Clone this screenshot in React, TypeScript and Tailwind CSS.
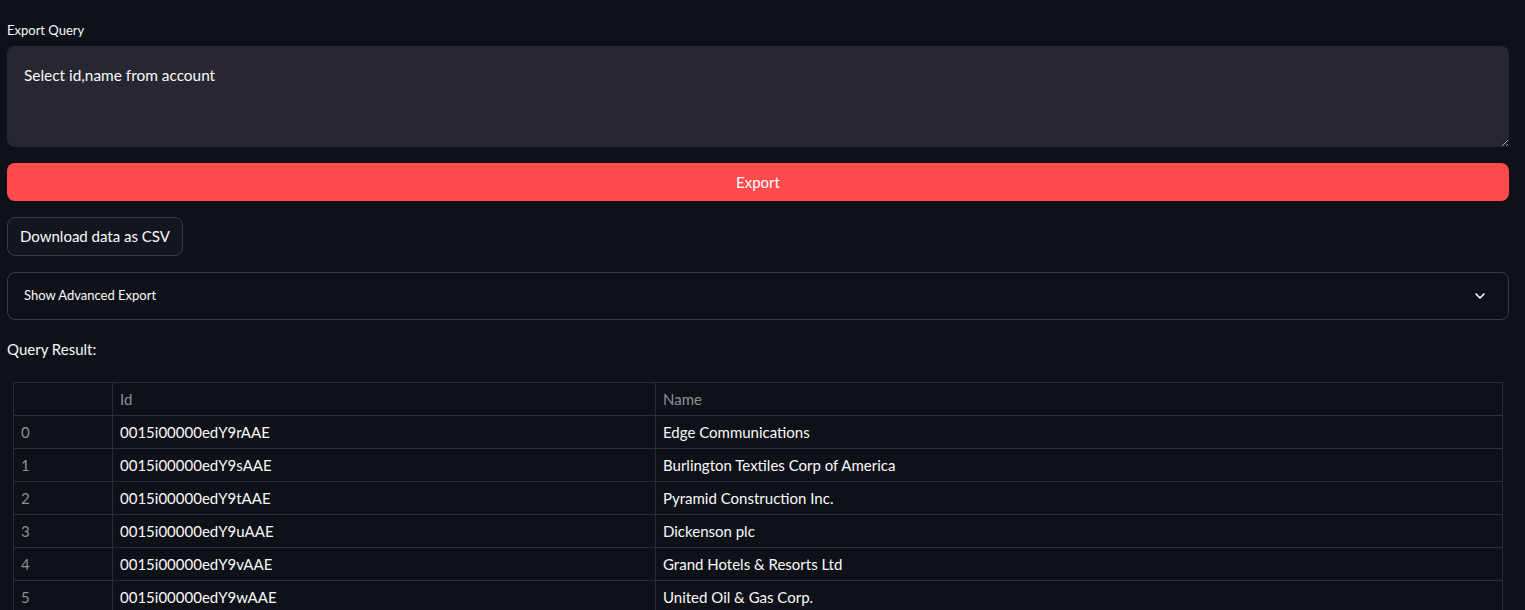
import { ChevronDown } from "lucide-react";

const rows = [
  ["0", "0015i00000edY9rAAE", "Edge Communications"],
  ["1", "0015i00000edY9sAAE", "Burlington Textiles Corp of America"],
  ["2", "0015i00000edY9tAAE", "Pyramid Construction Inc."],
  ["3", "0015i00000edY9uAAE", "Dickenson plc"],
  ["4", "0015i00000edY9vAAE", "Grand Hotels & Resorts Ltd"],
  ["5", "0015i00000edY9wAAE", "United Oil & Gas Corp."],
];

const cell = "h-[33px] flex items-center px-[7px] border-r border-b border-[#2b2e36]";

export default function App() {
  return (
    <div
      className="h-[610px] overflow-hidden bg-[#0e1117] pl-[7px] pr-[16px] pt-[21px] text-[#fafafa]"
      style={{ fontFamily: "'Lato', 'Noto Sans', sans-serif" }}
    >
      {/* Query input */}
      <label className="block text-[13px] leading-[18px] mb-[7px]">Export Query</label>
      <textarea
        defaultValue="Select id,name from account"
        className="block w-full h-[101px] resize-y rounded-lg bg-[#262730] px-[17px] py-[18px] text-[15.4px] leading-[22px] text-[#fafafa] outline-none"
      />

      {/* Export button */}
      <button className="mt-[16px] w-full h-[38px] rounded-lg bg-[#ff4b4b] text-[15px] text-white">
        Export
      </button>

      {/* Download button */}
      <button className="mt-[16px] block h-[39px] rounded-lg border border-[#3a3c44] bg-[#13161e] px-[12px] text-[15px] text-[#fafafa]">
        Download data as CSV
      </button>

      {/* Expander */}
      <div className="mt-[16px] flex h-[48px] items-center justify-between rounded-lg border border-[#3a3c44] pl-[16px] pr-[20px]">
        <span className="text-[13px]">Show Advanced Export</span>
        <ChevronDown size={16} strokeWidth={2.5} className="text-[#fafafa]" />
      </div>

      {/* Result */}
      <p className="mt-[19px] text-[15px] leading-[20px]">Query Result:</p>

      <div className="mt-[23px] mx-[6px]">
        <div className="grid grid-cols-[99px_543px_1fr] border-l border-t border-[#2b2e36] text-[15px]">
          <div className={cell} />
          <div className={cell + " text-[#8e9096]"}>Id</div>
          <div className={cell + " text-[#8e9096]"}>Name</div>
          {rows.map((r) => [
            <div key={r[0] + "i"} className={cell + " text-[#8e9096]"}>{r[0]}</div>,
            <div key={r[0] + "a"} className={cell}>{r[1]}</div>,
            <div key={r[0] + "b"} className={cell}>{r[2]}</div>,
          ])}
        </div>
      </div>
    </div>
  );
}
